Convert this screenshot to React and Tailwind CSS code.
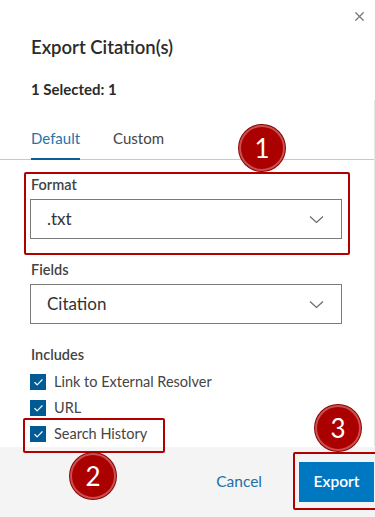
import React from "react";
import { X, Check } from "lucide-react";

function Marker({ n, className }) {
  return (
    <div
      className={`absolute w-[46px] h-[46px] rounded-full bg-[#aa0000] border-2 border-[#c9504f] ring-1 ring-[#8a0000] flex items-center justify-center text-white text-[26px] leading-none ${className}`}
    >
      {n}
    </div>
  );
}

function SelectBox({ value }) {
  return (
    <div className="flex items-center justify-between h-[40px] w-[312px] border border-[#7a7a7a] pl-[16px] pr-[17px]">
      <span className="text-[17px] text-[#333]">{value}</span>
      <svg width="15" height="9" viewBox="0 0 15 9" fill="none" className="text-[#6a6a6a]">
        <polyline points="1,1.5 7.5,7.5 14,1.5" stroke="currentColor" strokeWidth="1.2" />
      </svg>
    </div>
  );
}

function CheckRow({ label }) {
  return (
    <div className="flex items-center gap-[8px] h-[26px]">
      <span className="w-[16px] h-[16px] bg-[#005b94] flex items-center justify-center">
        <Check size={11} strokeWidth={2.5} className="text-white" />
      </span>
      <span className="text-[14.5px] text-[#444]">{label}</span>
    </div>
  );
}

export default function App() {
  return (
    <div
      className="relative w-[375px] h-[517px] overflow-hidden bg-white flex flex-col"
      style={{ fontFamily: "Lato, 'Open Sans', sans-serif" }}
    >
      {/* Close */}
      <button className="absolute top-[5px] right-[4px] p-1 text-[#777]">
        <X size={15} strokeWidth={2} />
      </button>

      {/* scroll edge */}
      <div className="absolute right-0 top-[100px] bottom-[71px] w-px bg-[#e6e6e6]" />

      <div className="pl-[31px] pt-[33px]">
        <h2 className="text-[18.5px] leading-[28px] font-semibold text-[#2b2b2b]">Export Citation(s)</h2>
        <p className="mt-[17px] text-[15px] leading-[22px] font-bold text-[#2b2b2b]">1 Selected: 1</p>
      </div>

      {/* Tabs */}
      <div className="mt-[28px] flex gap-[33px] pl-[31px] border-b border-[#c8c8c8] mr-px">
        <div className="pb-[10px] border-b-2 border-[#0a5d97] -mb-px text-[15px] leading-[20px] text-[#2474ab]">Default</div>
        <div className="pb-[10px] text-[15px] leading-[20px] text-[#444]">Custom</div>
      </div>

      <div className="pl-[30px] pt-[15px] flex flex-col">
        <label className="text-[14.5px] leading-[20px] font-semibold text-[#444] pl-px">Format</label>
        <div className="mt-[4px]">
          <SelectBox value=".txt" />
        </div>

        <label className="mt-[21px] text-[14.5px] leading-[20px] font-semibold text-[#444] pl-px">Fields</label>
        <div className="mt-[4px]">
          <SelectBox value="Citation" />
        </div>

        <label className="mt-[21px] text-[14.5px] leading-[20px] font-semibold text-[#444] pl-px">Includes</label>
        <div className="mt-[4px] flex flex-col">
          <CheckRow label="Link to External Resolver" />
          <CheckRow label="URL" />
          <CheckRow label="Search History" />
        </div>
      </div>

      {/* Footer */}
      <div className="mt-auto h-[71px] bg-[#f4f4f4] flex items-center justify-end gap-[37px] pr-px">
        <button className="text-[15.5px] text-[#1f6fa6]">Cancel</button>
        <button className="w-[75px] h-[40px] bg-[#0078c1] text-white text-[15.5px] font-semibold">Export</button>
      </div>

      {/* Annotations */}
      <div className="absolute left-[24px] top-[172px] w-[326px] h-[83px] border-2 border-[#b00000] rounded-[2px]" />
      <div className="absolute left-[23px] top-[418px] w-[142px] h-[35px] border-2 border-[#b00000] rounded-[2px]" />
      <div className="absolute left-[293px] top-[452px] w-[90px] h-[58px] border-2 border-[#b00000] rounded-[2px]" />
      <Marker n="1" className="left-[239px] top-[125px]" />
      <Marker n="2" className="left-[70px] top-[453px]" />
      <Marker n="3" className="left-[315px] top-[405px]" />
    </div>
  );
}
